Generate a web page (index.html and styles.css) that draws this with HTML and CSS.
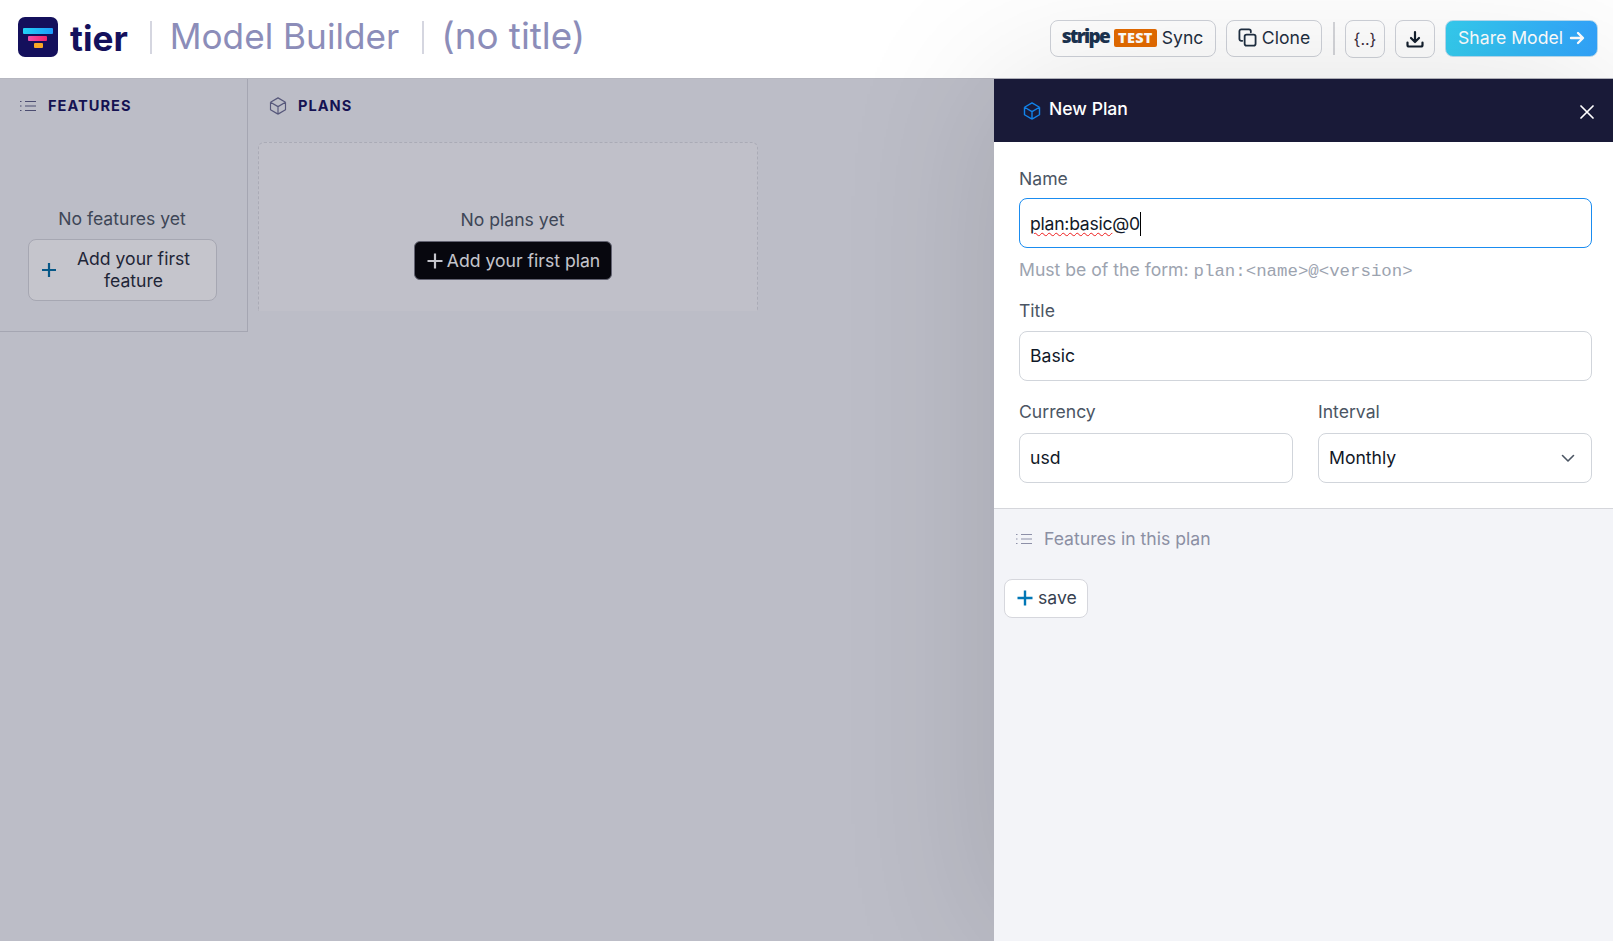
FILE: index.html
```html
<!DOCTYPE html>
<html lang="en">
<head>
<meta charset="utf-8">
<title>Model Builder</title>
<link rel="stylesheet" href="styles.css">
</head>
<body>
<header class="topbar">
  <div class="brand">
    <svg class="logo" viewBox="0 0 40 40" width="40" height="40"><defs><linearGradient id="lg1" x1="0" x2="1" y1="0" y2="0"><stop offset="0" stop-color="#22d3f5"/><stop offset="1" stop-color="#1e9bfb"/></linearGradient><linearGradient id="lg2" x1="0" x2="1" y1="0" y2="0"><stop offset="0" stop-color="#f04fa8"/><stop offset="1" stop-color="#f5256a"/></linearGradient></defs><rect width="40" height="40" rx="7" fill="#14105c"/><rect x="5" y="11" width="30" height="6" rx="1" fill="url(#lg1)"/><rect x="10" y="19" width="19" height="5" rx="1" fill="url(#lg2)"/><rect x="16" y="26" width="9" height="5" rx="1" fill="#f9a825"/></svg>
    <span class="wordmark">tier</span>
    <span class="title-sep"></span>
    <span class="page-title">Model Builder</span>
    <span class="title-sep second"></span>
    <span class="page-title doc-title">(no title)</span>
  </div>
  <div class="actions">
    <button class="btn stripe-btn"><span class="stripe">stripe</span><span class="test">TEST</span><span>Sync</span></button>
    <button class="btn clone-btn"><svg class="ic19" viewBox="0 0 20 20" fill="none" stroke="#1f2f42" stroke-width="1.900" stroke-linejoin="round" stroke-linecap="round"><rect x="7" y="7" width="11.5" height="11.5" rx="2"/><path d="M4.500 13.500H3.500a2 2 0 0 1-2-2v-8a2 2 0 0 1 2-2h8a2 2 0 0 1 2 2v1"/></svg><span>Clone</span></button>
    <span class="action-sep"></span>
    <button class="btn square json">{..}</button>
    <button class="btn square"><svg class="ic20" viewBox="0 0 20 20" fill="none" stroke="#14202e" stroke-width="2.200" stroke-linecap="round" stroke-linejoin="round"><path d="M10 3v9.500M6 9l4 4 4-4M2.500 13.500v2.500a1.500 1.500 0 0 0 1.500 1.500h12a1.500 1.500 0 0 0 1.500-1.500v-2.500"/></svg></button>
    <button class="btn share"><span>Share Model</span><svg class="ic16" viewBox="0 0 16 16" fill="none" stroke="#fff" stroke-width="2.400" stroke-linecap="round" stroke-linejoin="round"><path d="M2 8h11.500M9 3l5 5-5 5"/></svg></button>
  </div>
</header>
<main class="workspace">
  <aside class="features">
    <h2 class="col-head"><svg class="head-ic" viewBox="0 0 16 16" fill="none" stroke="#5d5e86" stroke-width="1"><path d="M5 3.500h11M5 8h11M5 12.500h11"/><path d="M0 3.500h1.500M0 8h1.500M0 12.500h1.500"/></svg><span>FEATURES</span></h2>
    <div class="feat-empty">
      <p class="empty-text">No features yet</p>
      <button class="add-feature"><svg class="plus" viewBox="0 0 16 16" fill="none" stroke="#006da3" stroke-width="2.200"><path d="M8 1v14M1 8h14"/></svg><span>Add your first feature</span></button>
    </div>
  </aside>
  <section class="plans">
    <h2 class="col-head plans-head"><svg class="cube-ic" viewBox="0 0 24 24" fill="none" stroke="#6b6c92" stroke-width="1.400" stroke-linejoin="round"><path d="M21 7.500l-9-5.250L3 7.500m18 0l-9 5.250m9-5.250v9l-9 5.250M3 7.500l9 5.250M3 7.500v9l9 5.250m0-9v9"/></svg><span>PLANS</span></h2>
    <div class="plan-box">
      <p class="empty-text">No plans yet</p>
      <button class="add-plan"><svg class="plus light" viewBox="0 0 16 16" fill="none" stroke="#fff" stroke-width="2.200"><path d="M8 .500v15M.500 8h15"/></svg><span>Add your first plan</span></button>
    </div>
  </section>
  <div class="overlay"></div>
  <aside class="drawer">
    <div class="drawer-head">
      <svg class="cube-blue" viewBox="0 0 24 24" fill="none" stroke="#1283ea" stroke-width="1.700" stroke-linejoin="round"><path d="M21 7.500l-9-5.250L3 7.500m18 0l-9 5.250m9-5.250v9l-9 5.250M3 7.500l9 5.250M3 7.500v9l9 5.250m0-9v9"/></svg>
      <span class="drawer-title">New Plan</span>
      <svg class="close" viewBox="0 0 14 14" fill="none" stroke="#fff" stroke-width="1.700" stroke-linecap="round"><path d="M1 1l12 12M13 1L1 13"/></svg>
    </div>
    <form class="plan-form">
      <label class="lbl">Name</label>
      <div class="field focus"><span class="squiggle">plan:basic</span>@0<span class="caret"></span></div>
      <p class="hint">Must be of the form: <code class="mono">plan:&lt;name&gt;@&lt;version&gt;</code></p>
      <label class="lbl title-lbl">Title</label>
      <div class="field">Basic</div>
      <div class="two">
        <div class="col">
          <label class="lbl">Currency</label>
          <div class="field">usd</div>
        </div>
        <div class="col">
          <label class="lbl">Interval</label>
          <div class="field select"><span>Monthly</span><svg class="chev" viewBox="0 0 14 9" fill="none" stroke="#4b5563" stroke-width="1.600" stroke-linecap="round" stroke-linejoin="round"><path d="M1.500 1.500L7 7l5.500-5.500"/></svg></div>
        </div>
      </div>
    </form>
    <div class="plan-features">
      <div class="pf-head"><svg class="head-ic" viewBox="0 0 16 16" fill="none" stroke="#8d90a8" stroke-width="1.200"><path d="M5 3.500h11M5 8h11M5 12.500h11M0 3.500h1.500M0 8h1.500M0 12.500h1.500"/></svg><span>Features in this plan</span></div>
      <button class="save-btn"><svg class="plus save-plus" viewBox="0 0 16 16" fill="none" stroke="#0077b6" stroke-width="2.400"><path d="M8 .500v15M.500 8h15"/></svg><span>save</span></button>
    </div>
  </aside>
</main>
</body>
</html>
```
FILE: styles.css
```css
* { box-sizing: border-box; }
html, body { margin: 0; height: 100%; overflow: hidden; }
body {
  display: flex;
  flex-direction: column;
  font-family: Inter, "Liberation Sans", sans-serif;
  font-size: 17.600px;
  line-height: 24px;
  color: #1f2937;
  background: #fff;
}
p, h2 { margin: 0; }
button { font: inherit; cursor: pointer; }

.topbar {
  flex: none;
  height: 79px;
  display: flex;
  align-items: center;
  justify-content: space-between;
  padding: 0 15px 1px 18px;
  border-bottom: 1px solid #b6b7c0;
  background: #fff;
}
.brand { display: flex; align-items: center; margin-bottom: 3px; }
.logo { flex: none; display: block; }
.wordmark { margin: 1px 0 0 12px; font-size: 35.200px; line-height: 44px; font-weight: 700; color: #14105c; }
.title-sep { width: 2px; height: 33px; margin: 0 18px 0 22px; background: #d5d6e0; }
.title-sep.second { margin: 0 17px 0 23px; }
.page-title { margin-top: -3px; font-size: 35.200px; line-height: 44px; font-weight: 400; color: #8c8db9; }
.doc-title { font-size: 36.800px; }

.actions { display: flex; align-items: center; }
.btn {
  height: 37px;
  display: flex;
  align-items: center;
  justify-content: center;
  padding: 0 0 2px;
  border: 1px solid #cfd2d9;
  border-radius: 8px;
  background: #fff;
  color: #1f2f42;
}
.stripe-btn { width: 166px; gap: 5px; padding-left: 2px; padding-right: 3px; }
.stripe { font-family: "Open Sans", sans-serif; font-weight: 800; font-size: 19px; letter-spacing: -1.700px; color: #1b3350; margin-top: -3px; }
.test { font-family: "Open Sans", sans-serif; font-weight: 800; font-size: 14.500px; line-height: 18px; letter-spacing: .3px; padding: 0 4px; border-radius: 2px; background: #e56b00; color: #fff; }
.clone-btn { width: 96px; margin-left: 10px; gap: 5px; }
.ic20 { width: 20px; height: 20px; flex: none; }
.ic19 { width: 19px; height: 19px; flex: none; }
.ic16 { width: 16px; height: 16px; flex: none; }
.action-sep { width: 2px; height: 33px; margin: 0 10px 0 11px; background: #d5d6da; }
.square { width: 40px; height: 38px; margin-right: 10px; padding: 0; }
.json { font-size: 16px; color: #3a2a3a; }
.share {
  width: 153px;
  gap: 6px;
  border: 1px solid #b9dcf0;
  color: #fff;
  background: linear-gradient(90deg, #35cdf0, #32a3fb);
}

.workspace { flex: 1; position: relative; display: flex; align-items: flex-start; background: #f3f4f8; min-height: 0; }
.features { width: 248px; height: 253px; flex: none; border-right: 1px solid #d5d6dc; border-bottom: 1px solid #d5d6dc; }
.col-head {
  display: flex;
  align-items: center;
  height: 54px;
  padding: 0 0 0 20px;
  font-size: 14.600px;
  font-weight: 700;
  letter-spacing: 1px;
  color: #14105c;
}
.head-ic { width: 16px; height: 16px; flex: none; margin-right: 12px; }
.feat-empty { display: flex; flex-direction: column; align-items: center; padding: 74px 3px 0 0; }
.empty-text { color: #4b5563; text-align: center; }
.add-feature {
  width: 189px;
  height: 62px;
  margin-top: 8px;
  display: flex;
  align-items: center;
  padding: 0 16px 0 12px;
  gap: 11px;
  line-height: 22px;
  border: 1px solid #d6d7dd;
  border-radius: 8px;
  background: #fff;
  color: #1f2937;
  text-align: center;
}
.plus { width: 16px; height: 16px; flex: none; }
.plans { flex: none; width: 510px; padding-left: 10px; }
.plans-head { padding-left: 10px; }
.cube-ic { width: 20px; height: 20px; flex: none; margin-right: 10px; }
.plan-box {
  width: 500px;
  height: 169px;
  margin-top: 9px;
  padding: 65px 0 0 9px;
  display: flex;
  flex-direction: column;
  align-items: center;
  border: 1px dashed #dbdce2;
  border-bottom: 0;
  border-radius: 6px 6px 0 0;
  background: #f9f9fb;
}
.add-plan {
  width: 198px;
  height: 39px;
  margin-top: 9px;
  display: flex;
  align-items: center;
  justify-content: center;
  gap: 4px;
  padding: 0 0 0 2px;
  border: 1px solid #7a7b85;
  border-radius: 6px;
  background: #000;
  color: #fff;
}
.overlay { position: absolute; inset: 0; background: rgba(26, 27, 56, .255); }

.drawer {
  position: absolute;
  top: 0;
  right: 0;
  bottom: 0;
  width: 619px;
  display: flex;
  flex-direction: column;
  background: #fff;
  box-shadow: 0 0 150px rgba(0, 0, 0, .12);
}
.drawer-head { flex: none; height: 63px; display: flex; align-items: center; padding: 0 19px 3px 28px; background: #191a38; color: #fff; }
.cube-blue { width: 20px; height: 20px; flex: none; margin: 4px 7px 0 0; }
.drawer-title { flex: 1; font-size: 17.600px; font-weight: 500; }
.close { width: 14px; height: 14px; flex: none; margin-top: 6px; }
.plan-form { flex: none; height: 366.500px; padding: 25px 21px 0 25px; border-bottom: 1px solid #d5d6db; }
.lbl { display: block; color: #4b5563; }
.field {
  height: 50px;
  margin-top: 8px;
  display: flex;
  align-items: center;
  padding: 0 10px;
  border: 1px solid #d1d5db;
  border-radius: 8px;
  color: #111827;
  background: #fff;
}
.plan-form > .lbl:first-child + .field { margin-top: 7px; }
.field.focus { border-color: #1a8cf0; white-space: pre; padding-top: 1px; letter-spacing: -.25px; }
.squiggle { text-decoration: underline wavy #ee1c1c 1.200px; text-underline-offset: 2px; }
.caret { width: 1px; height: 24px; background: #000; }
.hint { margin-top: 10px; color: #9ca3af; }
.mono { font-family: "Liberation Mono", monospace; font-size: 17.400px; }
.title-lbl { margin-top: 14.500px; }
.two { display: grid; grid-template-columns: 273.500px 274px; column-gap: 25.500px; margin-top: 19.500px; }
.col .field { margin-top: 9px; }
.select { justify-content: space-between; padding-right: 16px; }
.chev { width: 14px; height: 9px; flex: none; }
.plan-features { flex: 1; background: #f3f4f8; }
.pf-head { display: flex; align-items: center; height: 60px; padding-left: 22px; color: #8b8fa3; }
.save-btn {
  display: flex;
  align-items: center;
  gap: 5px;
  width: 84px;
  height: 39px;
  margin: 10px 0 0 10px;
  padding: 0 0 0 12px;
  border: 1px solid #d6d7dd;
  border-radius: 8px;
  background: #fff;
  color: #374151;
}
```
